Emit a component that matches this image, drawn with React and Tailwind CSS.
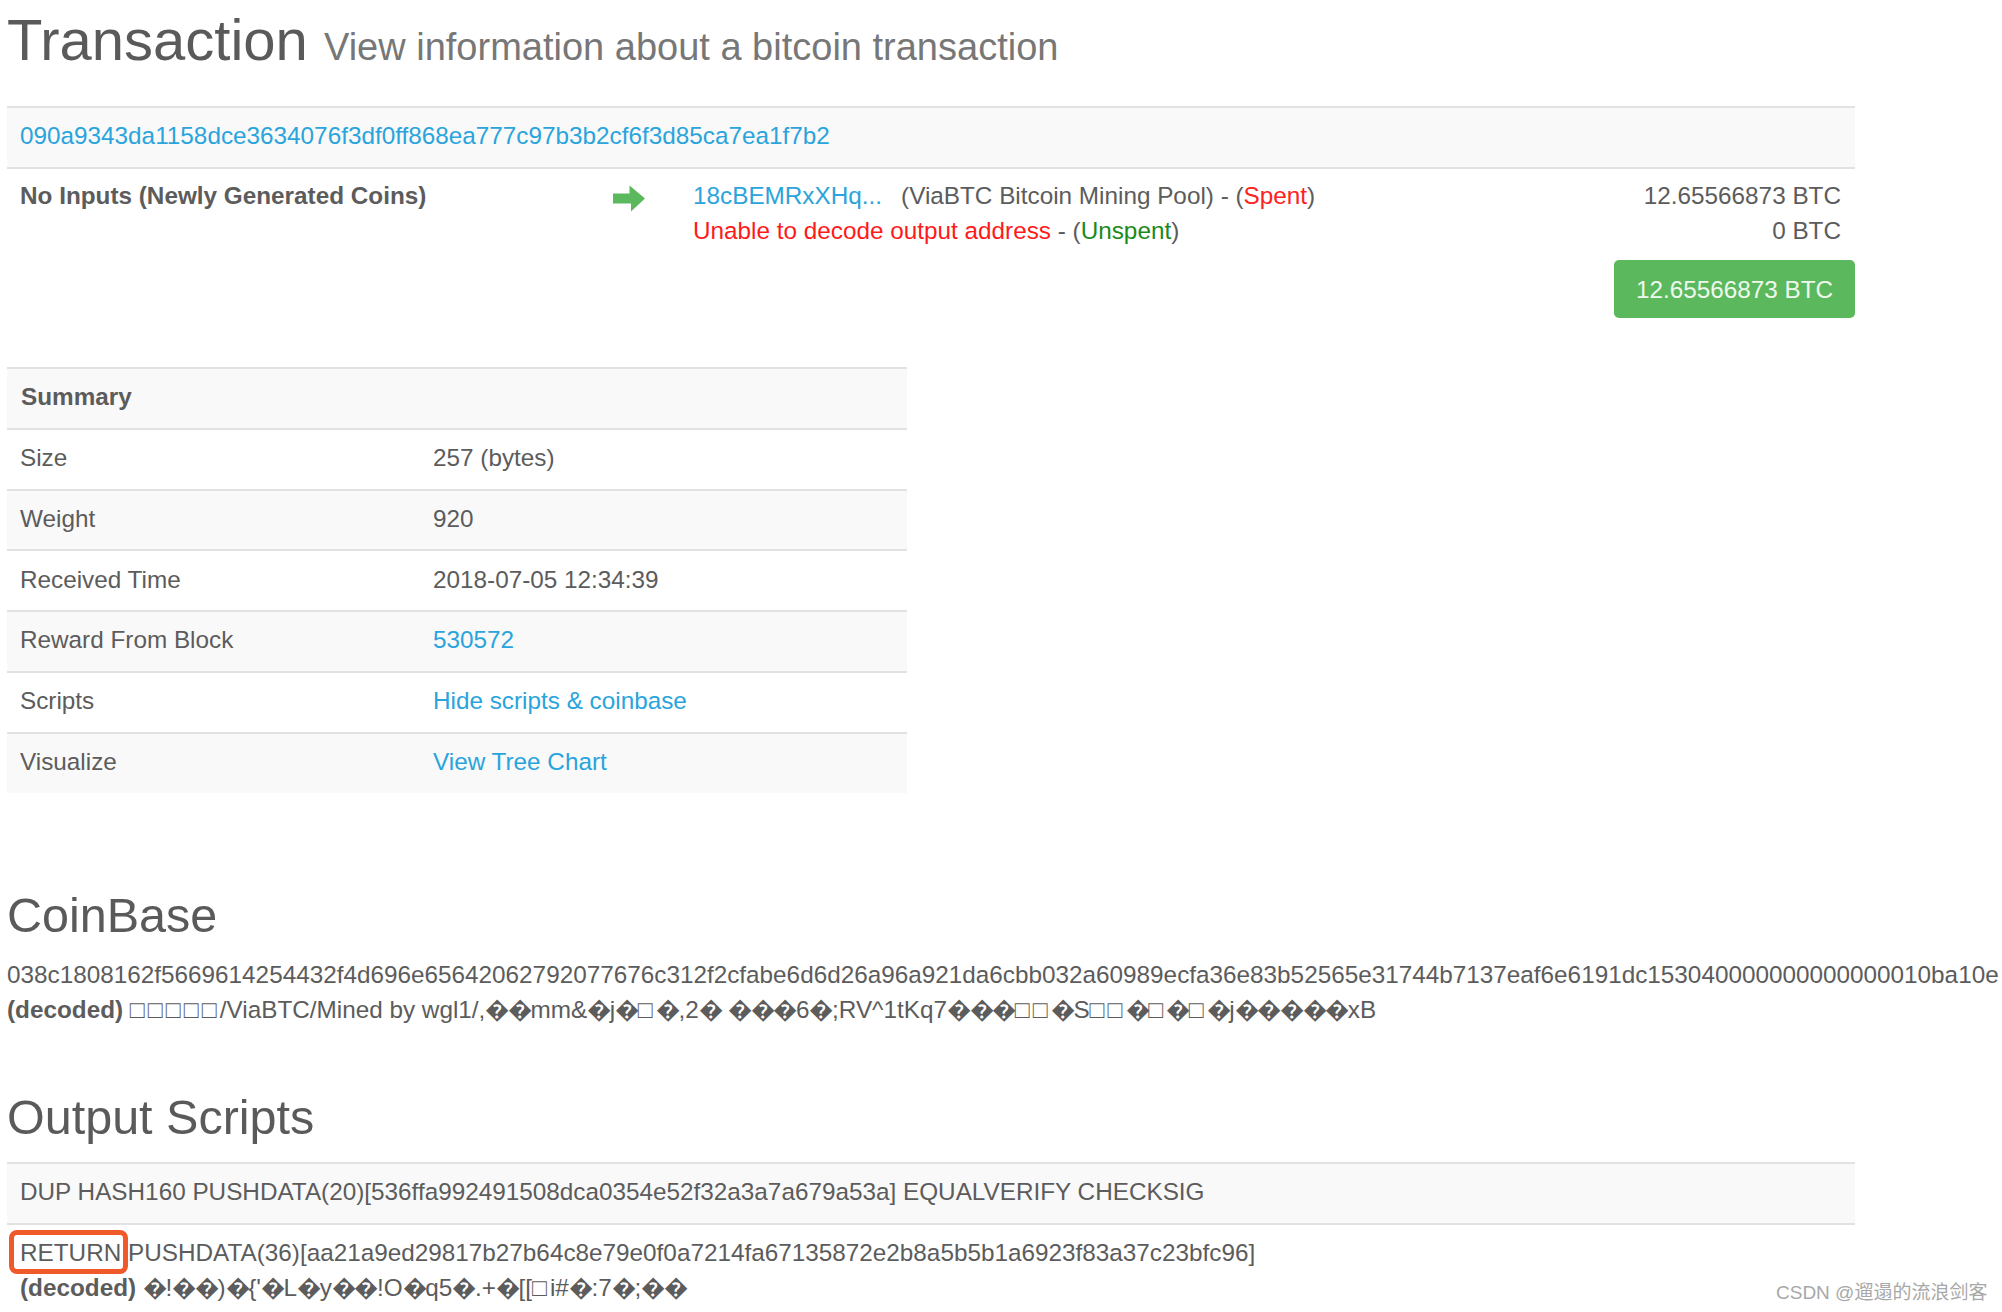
import React from 'react';

const D = '\uFFFD';
const B = '\u25A1';

const coinbaseHex =
  '038c1808162f5669614254432f4d696e65642062792077676c312f2cfabe6d6d26a96a921da6cbb032a60989ecfa36e83b52565e31744b7137eaf6e6191dc153040000000000000010ba10e';

const coinbaseDecoded = `${B}${B}${B}${B}${B}/ViaBTC/Mined by wgl1/,${D}${D}mm&${D}j${D}${B}${D},2${D} ${D}${D}${D}6${D};RV^1tKq7${D}${D}${D}${B}${B}${D}S${B}${B}${D}${B}${D}${B}${D}j${D}${D}${D}${D}${D}xB`;

const returnDecoded = `${D}!${D}${D})${D}{'${D}L${D}y${D}${D}!O${D}q5${D}.+${D}[[${B}i#${D}:7${D};${D}${D}`;

const summaryRows = [
  { label: 'Size', value: '257 (bytes)' },
  { label: 'Weight', value: '920' },
  { label: 'Received Time', value: '2018-07-05 12:34:39' },
  { label: 'Reward From Block', value: '530572', link: true },
  { label: 'Scripts', value: 'Hide scripts & coinbase', link: true },
  { label: 'Visualize', value: 'View Tree Chart', link: true },
];

function ArrowRight() {
  return (
    <svg viewBox="0 0 32 27" className="w-[32px] h-[27px] fill-[#5cb85c]">
      <path d="M0 8.5h16.5V0.5L32 13.5 18 26.5v-8H0z" />
    </svg>
  );
}

// replacement chars and tofu boxes have other widths than the fallback font gives
function Garbled({ text }) {
  return text.split(/(\uFFFD+|\u25A1+)/).map((part, i) => {
    if (part.startsWith(D)) return <span key={i} className="tracking-[-1.4px]">{part}</span>;
    if (part.startsWith(B)) return <span key={i} className="tracking-[3.3px]">{part}</span>;
    return part;
  });
}

function SummaryTable() {
  return (
    <div className="w-[900px]">
      <div className="h-[60.75px] flex items-center pl-[14px] pb-[3px] bg-[#f9f9f9] border-t-2 border-[#e2e2e2] font-bold">
        Summary
      </div>
      {summaryRows.map((row, i) => (
        <div
          key={row.label}
          className={`h-[60.75px] last:h-[61.5px] grid grid-cols-[413px_1fr] items-center pl-[13px] pb-[3px] border-t-2 border-[#e2e2e2] ${
            i % 2 === 1 ? 'bg-[#f9f9f9]' : 'bg-white'
          }`}
        >
          <span>{row.label}</span>
          <span className={row.link ? 'text-[#2aa4dc]' : ''}>{row.value}</span>
        </div>
      ))}
    </div>
  );
}

export default function App() {
  return (
    <div className="relative w-[2002px] h-[1312px] overflow-hidden bg-white pl-[7px] text-[24.3px] leading-[35px] text-[#5c5c5c] font-['Liberation_Sans',sans-serif]">
      <div className="h-[106px] pt-[10px]">
        <h1 className="text-[58px] leading-[60px] text-[#5a5a5a] whitespace-nowrap">
          Transaction <small className="text-[38px] text-[#777]">View information about a bitcoin transaction</small>
        </h1>
      </div>

      <div className="w-[1848px]">
        <div className="h-[61px] flex items-center pl-[13px] pb-[4px] bg-[#f9f9f9] border-t-2 border-[#e2e2e2] text-[#2aa4dc]">
          090a9343da1158dce3634076f3df0ff868ea777c97b3b2cf6f3d85ca7ea1f7b2
        </div>
        <div className="h-[200px] border-t-2 border-[#e2e2e2] pt-[9px] pl-[13px] flex">
          <div className="w-[593px] font-bold">No Inputs (Newly Generated Coins)</div>
          <div className="w-[80px] pt-[7px]">
            <ArrowRight />
          </div>
          <div className="flex-1 flex flex-col">
            <div className="flex justify-between pr-[14px]">
              <span>
                <span className="text-[#2aa4dc]">18cBEMRxXHq...</span>
                <span className="ml-[19px]">(ViaBTC Bitcoin Mining Pool) - (<span className="text-[#ff2020]">Spent</span>)</span>
              </span>
              <span>12.65566873 BTC</span>
            </div>
            <div className="flex justify-between pr-[14px]">
              <span>
                <span className="text-[#ff1a1a]">Unable to decode output address</span> - (<span className="text-[#1a8a1a]">Unspent</span>)
              </span>
              <span>0 BTC</span>
            </div>
            <div className="flex justify-end mt-[12px]">
              <div className="w-[241px] h-[58px] flex items-center justify-center rounded-[5px] bg-[#5cb85c] text-[#eef8ee]">
                12.65566873 BTC
              </div>
            </div>
          </div>
        </div>
      </div>

      <SummaryTable />

      <h2 className="mt-[98px] text-[48.5px] leading-[48px] text-[#5a5a5a]">CoinBase</h2>
      <div className="mt-[18px] whitespace-nowrap">{coinbaseHex}</div>
      <div className="whitespace-nowrap">
        <b>(decoded)</b> <Garbled text={coinbaseDecoded} />
      </div>

      <h2 className="mt-[66px] text-[48.5px] leading-[48px] text-[#5a5a5a]">Output Scripts</h2>
      <div className="mt-[21px] w-[1848px]">
        <div className="h-[61px] flex items-center pl-[13px] pb-[4px] bg-[#f9f9f9] border-t-2 border-[#e2e2e2]">
          DUP HASH160 PUSHDATA(20)[536ffa992491508dca0354e52f32a3a7a679a53a] EQUALVERIFY CHECKSIG
        </div>
        <div className="border-t-2 border-[#e2e2e2] pt-[10px] pl-[13px]">
          <div className="whitespace-nowrap">
            <span className="relative">
              RETURN
              <span className="absolute left-[-11px] right-[-7px] top-[-9px] bottom-[-8px] border-[5px] border-[#f0592a] rounded-[8px]" />
            </span>{' '}
            PUSHDATA(36)[aa21a9ed29817b27b64c8e79e0f0a7214fa67135872e2b8a5b5b1a6923f83a37c23bfc96]
          </div>
          <div className="whitespace-nowrap">
            <b>(decoded)</b> <Garbled text={returnDecoded} />
          </div>
        </div>
      </div>

      <div className="absolute left-[1776px] top-[1281px] text-[19px] leading-[24px] text-[#a8a8a8] whitespace-nowrap font-['Liberation_Sans','Noto_Sans_CJK_SC',sans-serif]">
        CSDN @遛遢的流浪剑客
      </div>
    </div>
  );
}
